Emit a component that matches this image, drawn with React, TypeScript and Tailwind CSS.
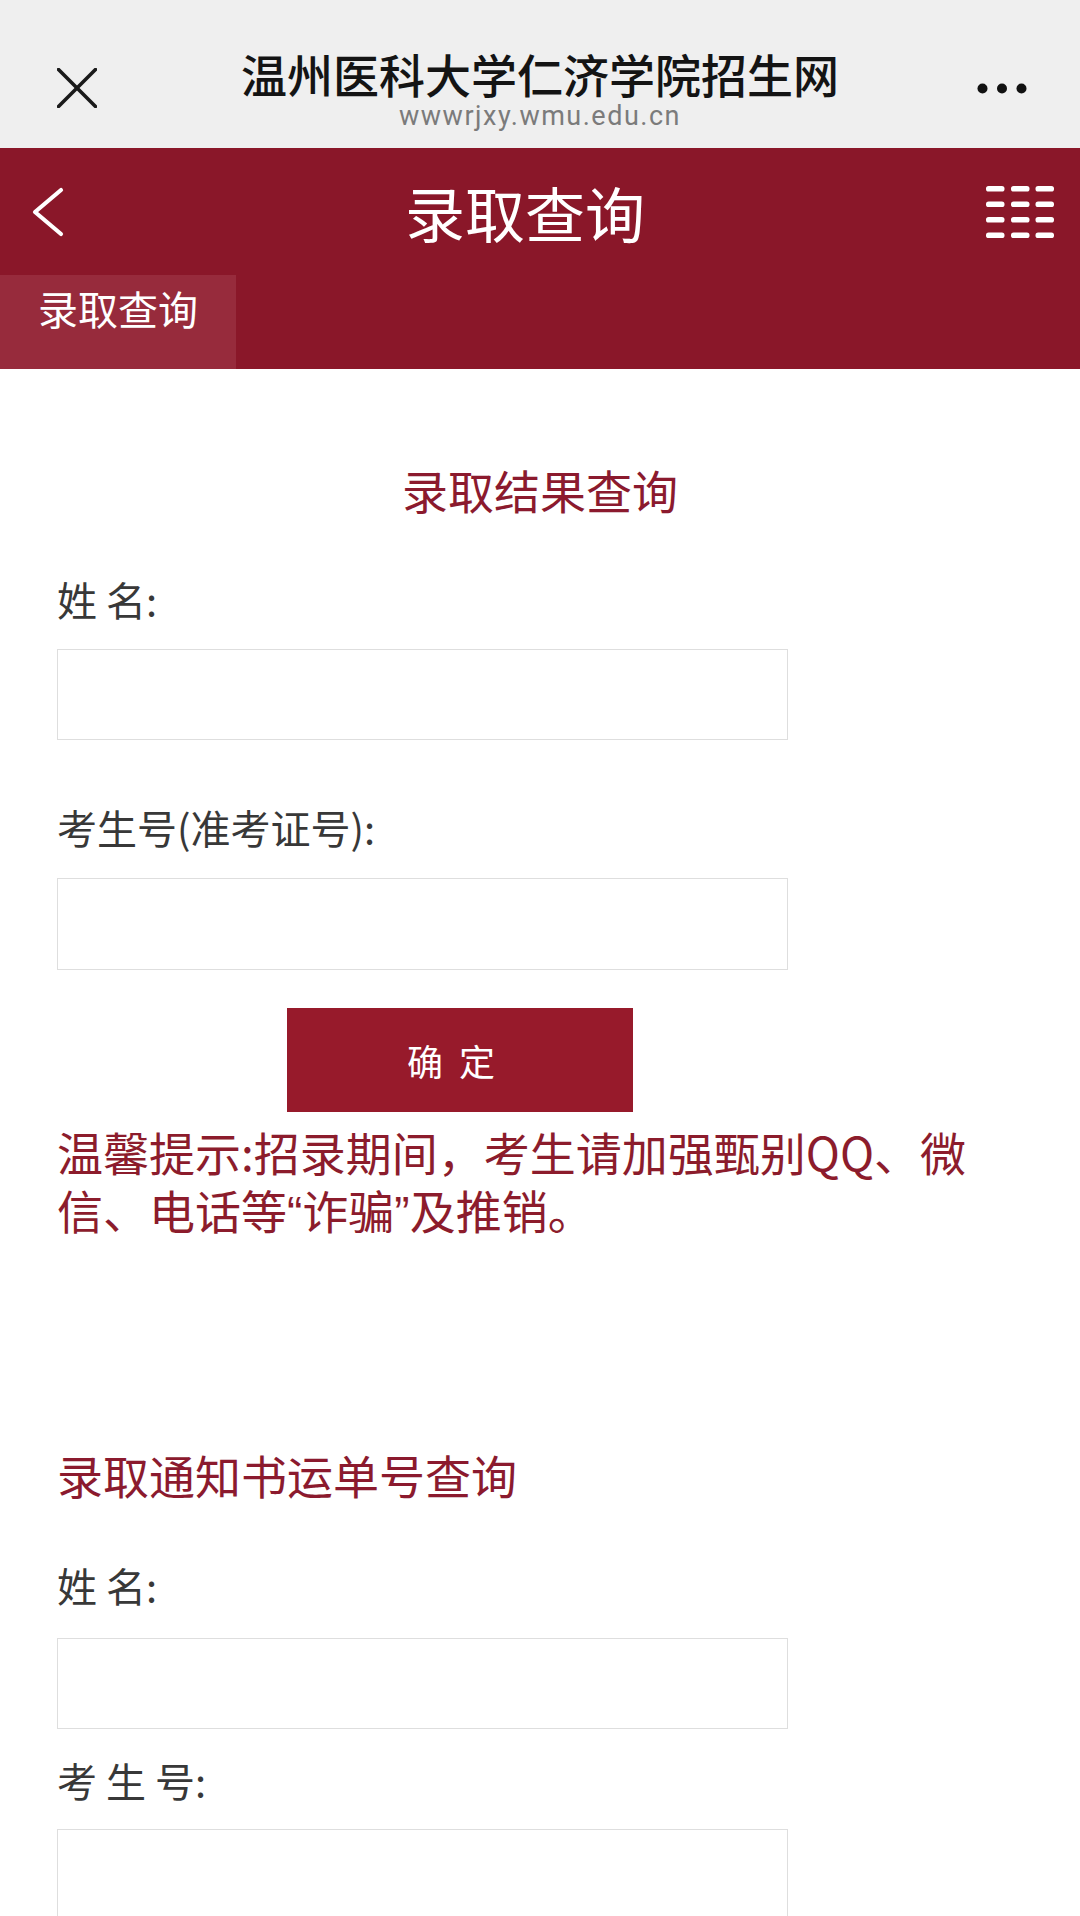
export default function App() {
  const cjk = "font-['Noto_Sans_CJK_SC','Noto_Sans',sans-serif]";
  return (
    <div className={`w-[1080px] min-h-[1916px] bg-white ${cjk}`}>
      {/* Browser top bar */}
      <div className="flex h-[148px] bg-[#efefef]">
        <div className="w-[160px] pl-[57px] pt-[68px]">
          <svg width="40" height="40" viewBox="0 0 40 40">
            <line x1="1.5" y1="1.5" x2="38.5" y2="38.5" stroke="#1a1a1a" strokeWidth="3.6" strokeLinecap="round" />
            <line x1="38.5" y1="1.5" x2="1.5" y2="38.5" stroke="#1a1a1a" strokeWidth="3.6" strokeLinecap="round" />
          </svg>
        </div>
        <div className="flex flex-1 flex-col items-center pt-[50px]">
          <div className="text-[46px] leading-[46px] font-medium text-[#141414]">温州医科大学仁济学院招生网</div>
          <div className="mt-[6px] font-['Roboto','Noto_Sans',sans-serif] text-[27px] leading-[28px] tracking-[1.5px] text-[#7b7b7b]">
            wwwrjxy.wmu.edu.cn
          </div>
        </div>
        <div className="flex w-[160px] justify-end pr-[53px] pt-[83px]">
          <svg width="50" height="11" viewBox="0 0 50 11">
            <circle cx="5.5" cy="5.5" r="5" fill="#111" />
            <circle cx="25" cy="5.5" r="5" fill="#111" />
            <circle cx="44.5" cy="5.5" r="5" fill="#111" />
          </svg>
        </div>
      </div>

      {/* Red header */}
      <div className="bg-[#8a1729]">
        <div className="flex h-[127px] items-center">
          <div className="w-[100px] pl-[32px]">
            <svg width="32" height="50" viewBox="0 0 32 50">
              <polyline points="29,3 3,25 29,47" fill="none" stroke="#ffffff" strokeWidth="4.2" strokeLinecap="round" strokeLinejoin="round" />
            </svg>
          </div>
          <div className="flex-1 text-center text-[60px] leading-[72px] text-white">录取查询</div>
          <div className="flex w-[130px] justify-end pr-[26px]">
            <svg width="68" height="52" viewBox="0 0 68 52">
              {[0, 15.5, 31, 46.5].map((y) =>
                [0, 25, 49.5].map((x) => (
                  <rect key={`${x}-${y}`} x={x} y={y} width="18.5" height="5.5" rx="2.6" fill="#ffffff" />
                ))
              )}
            </svg>
          </div>
        </div>
        <div className="h-[94px]">
          <div className="h-full w-[236px] bg-[#972b3c] pl-[38px] pt-[9px] text-[40px] leading-[48px] text-white">
            录取查询
          </div>
        </div>
      </div>

      {/* Content */}
      <div className="px-[57px] pt-[90px]">
        <h2 className="text-center text-[46px] leading-[60px] text-[#8b1a2e]">录取结果查询</h2>

        <div className="mt-[54px] text-[40px] leading-[52px] text-[#383838]">姓 名:</div>
        <input className="mt-[24px] block h-[91px] w-[731px] border border-[#dedede] bg-white outline-none" />

        <div className="mt-[61px] text-[40px] leading-[52px] text-[#383838]">考生号(准考证号):</div>
        <input className="mt-[25px] block h-[92px] w-[731px] border border-[#dedede] bg-white outline-none" />

        <button className="ml-[230px] mt-[38px] block h-[104px] w-[346px] bg-[#971a2b] pr-[14px] text-[36px] tracking-[4px] text-white">
          确 定
        </button>

        <p className="mt-[10px] text-[46px] leading-[58px] text-[#8c1c2c]">
          温馨提示:招录期间，考生请加强甄别QQ、微
          <br />
          信、电话等<span className="font-['Liberation_Sans',sans-serif] leading-none">“</span>诈骗<span className="font-['Liberation_Sans',sans-serif] leading-none">”</span>及推销。
        </p>

        <h2 className="mt-[206px] text-[46px] leading-[60px] text-[#8b1a2e]">录取通知书运单号查询</h2>

        <div className="mt-[55px] text-[40px] leading-[52px] text-[#383838]">姓 名:</div>
        <input className="mt-[27px] block h-[91px] w-[731px] border border-[#dedede] bg-white outline-none" />

        <div className="mt-[25px] text-[40px] leading-[52px] text-[#383838]">考 生 号:</div>
        <input className="mt-[23px] block h-[92px] w-[731px] border border-[#dedede] bg-white outline-none" />
      </div>
    </div>
  );
}
